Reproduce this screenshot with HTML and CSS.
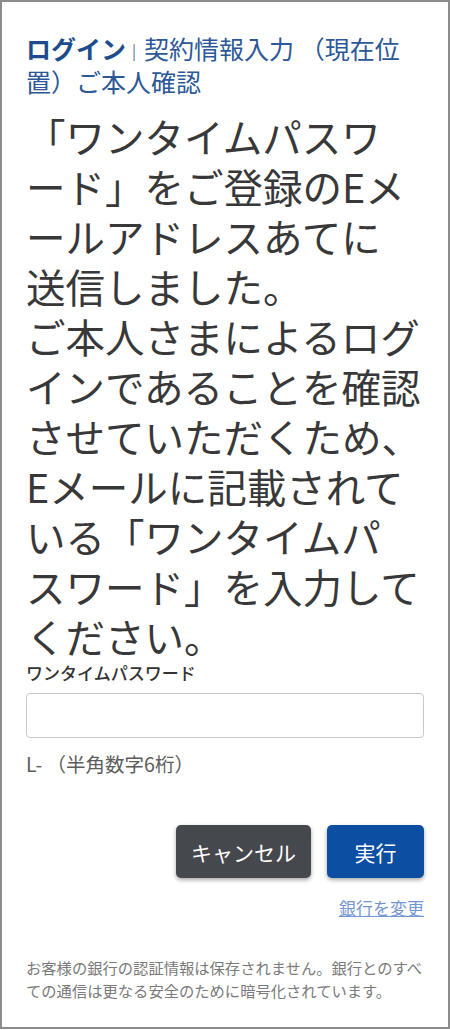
FILE: index.html
```html
<!DOCTYPE html>
<html lang="ja">
<head>
<meta charset="utf-8">
<title>ご本人確認</title>
<link rel="stylesheet" href="styles.css">
</head>
<body>
<div class="frame">
  <nav class="crumbs">
    <a class="crumb-login" href="#">ログイン</a><span class="crumb-sep">|</span><span class="crumb-current">契約情報入力 （現在位置）ご本人確認</span>
  </nav>
  <h1 class="lead">「ワンタイムパスワ<br>ード」をご登録のEメ<br>ールアドレスあてに<br>送信しました。<br>ご本人さまによるログ<br>インであることを確認<br>させていただくため、<br>Eメールに記載されて<br>いる「ワンタイムパ<br>スワード」を入力して<br>ください。</h1>
  <form class="otp-form">
    <label class="field-label" for="otp">ワンタイムパスワード</label>
    <input class="field-input" id="otp" type="text">
    <p class="field-hint">L- （半角数字6桁）</p>
    <div class="actions">
      <button type="button" class="btn btn-cancel">キャンセル</button>
      <button type="button" class="btn btn-submit">実行</button>
    </div>
    <div class="change-row"><a class="change-link" href="#">銀行を変更</a></div>
  </form>
  <p class="notice">お客様の銀行の認証情報は保存されません。銀行とのすべての通信は更なる安全のために暗号化されています。</p>
</div>
</body>
</html>
```

FILE: styles.css
```css
html, body {
  margin: 0;
  padding: 0;
  background: #ffffff;
}
body {
  font-family: "Noto Sans CJK JP", "Noto Sans", sans-serif;
}
.frame {
  box-sizing: border-box;
  width: 450px;
  height: 1029px;
  border: 2px solid #8c8c8c;
  padding: 31px 24px 0 24px;
  overflow: hidden;
}
.crumbs {
  font-size: 25px;
  line-height: 31px;
  color: #2b5a98;
}
.crumb-login {
  color: #1d4c8c;
  font-weight: 700;
  text-decoration: none;
}
.crumb-sep {
  display: inline-block;
  font-size: 15px;
  color: #5a6f8c;
  margin: 0 8px 0 6px;
  vertical-align: 2px;
}
.crumb-current {
  color: #2c5897;
}
.lead {
  margin: 14px 0 0 0;
  font-size: 39.5px;
  line-height: 50px;
  font-weight: 400;
  color: #383838;
  white-space: nowrap;
}
.otp-form {
  display: flex;
  flex-direction: column;
  margin: 1px 0 0 0;
}
.field-label {
  font-size: 17px;
  line-height: 22px;
  color: #333333;
  font-weight: 500;
}
.field-input {
  box-sizing: border-box;
  margin-top: 9px;
  width: 100%;
  height: 45px;
  border: 1px solid #c9c9c9;
  border-radius: 4px;
  background: #ffffff;
  font-size: 18px;
}
.field-hint {
  margin: 13px 0 0 0;
  font-size: 19.5px;
  line-height: 26px;
  color: #5c5c5c;
}
.actions {
  display: flex;
  justify-content: flex-end;
  gap: 16px;
  margin-top: 48px;
}
.btn {
  height: 53px;
  border: none;
  border-radius: 5px;
  color: #ffffff;
  font-family: inherit;
  font-size: 21px;
  box-shadow: 0 2px 4px rgba(0, 0, 0, 0.35);
}
.btn-cancel {
  width: 135px;
  background: #45484d;
}
.btn-submit {
  width: 97px;
  background: #0b4ea2;
}
.change-row {
  display: flex;
  justify-content: flex-end;
  margin-top: 18px;
}
.change-link {
  font-size: 17px;
  line-height: 24px;
  color: #7395d4;
  text-decoration: underline;
}
.notice {
  margin: 36px 0 0 0;
  font-size: 15.3px;
  line-height: 23px;
  color: #7a7a7a;
}
```
